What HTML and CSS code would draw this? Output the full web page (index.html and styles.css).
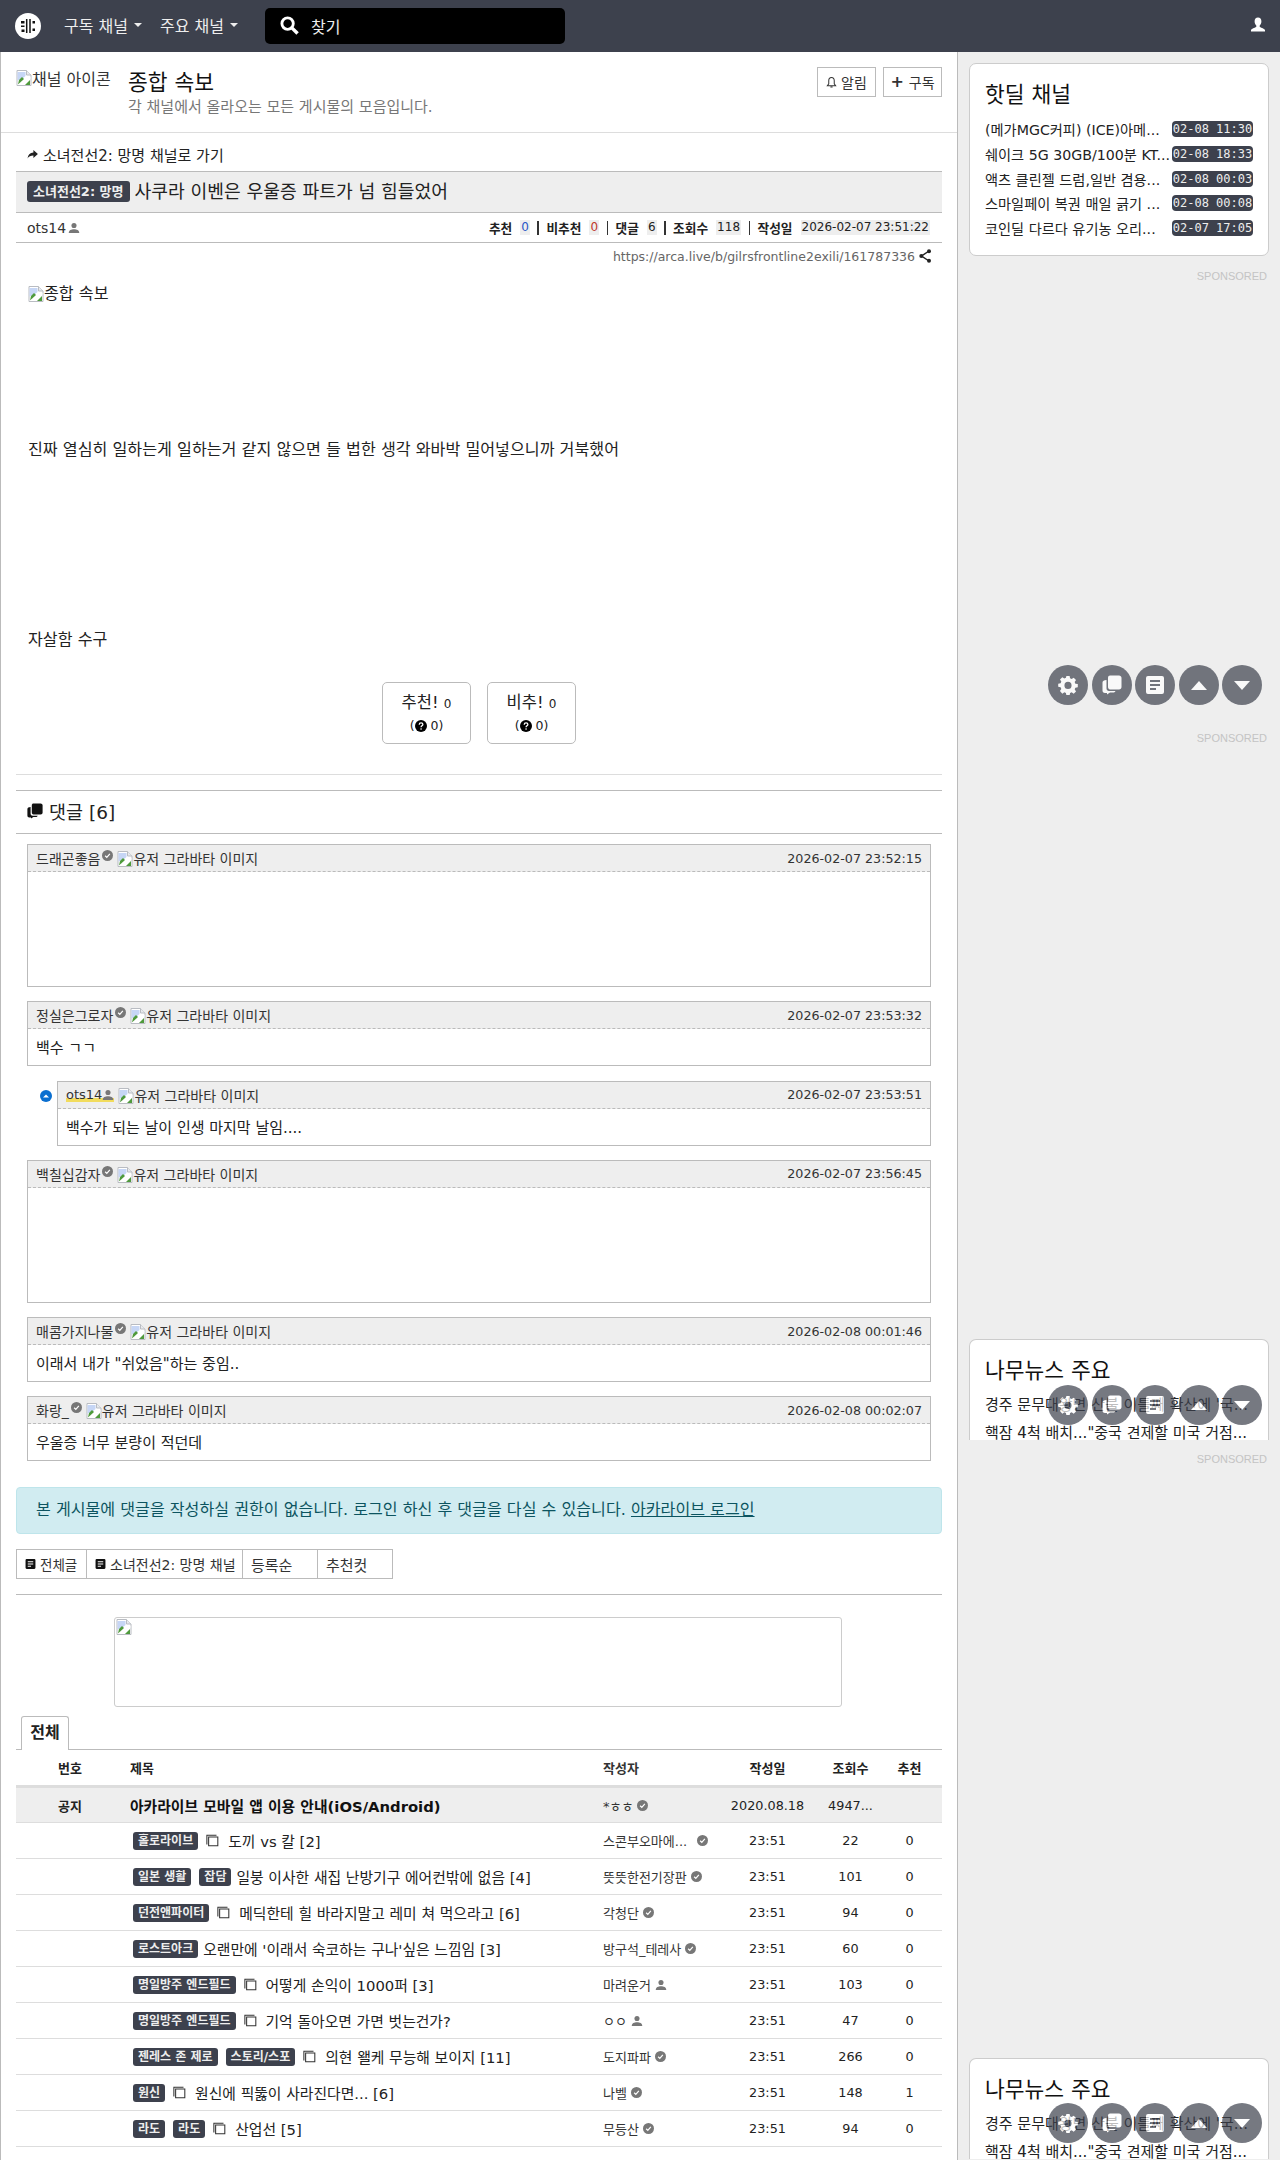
FILE: index.html
```html
<!DOCTYPE html>
<html lang="ko">
<head>
<meta charset="utf-8">
<title>종합 속보</title>
<link rel="stylesheet" href="styles.css">
</head>
<body>
<svg class="defs" width="0" height="0" aria-hidden="true">
  <symbol id="i-broken" viewBox="0 0 16 16">
    <path d="M1 .5h9.5L15 5v10.5H1z" fill="#fff" stroke="#b9bcc2" stroke-width="1"/>
    <path d="M10.5.5V5H15" fill="#e8eaed" stroke="#b9bcc2" stroke-width="1"/>
    <path d="M1.500 2h8v4l-3 2.500-5 2z" fill="#c6d6f5"/>
    <path d="M3 10l3-3 2 2-6 5.500z" fill="#4f9a3c"/>
    <path d="M9 15l5-5v5z" fill="#4f9a3c"/>
    <path d="M1.500 15l13-8v1.500L4 15z" fill="#fff"/>
  </symbol>
  <symbol id="i-check" viewBox="0 0 16 16">
    <circle cx="8" cy="8" r="8" fill="#777"/>
    <path d="M4.600 8.300l2.400 2.400 4.400-5" fill="none" stroke="#fff" stroke-width="1.800"/>
  </symbol>
  <symbol id="i-user" viewBox="0 0 16 16">
    <circle cx="8" cy="4.600" r="3.400"/>
    <path d="M1 14.500c0-3.600 3.400-4.800 7-4.800s7 1.200 7 4.800z"/>
  </symbol>
  <symbol id="i-pics" viewBox="0 0 16 16">
    <path d="M3 3.500h10.500v10H3z" fill="none" stroke="#333" stroke-width="1.200"/>
    <path d="M1 12V1.500h11" fill="none" stroke="#333" stroke-width="1.200"/>
  </symbol>
  <symbol id="i-chat" viewBox="0 0 20 20">
    <path d="M6 2.500C6 1.200 7 .5 8 .5h9c1.400 0 2.500 1 2.500 2.500v9c0 1.500-1 2.500-2.500 2.500H8C7 14.500 6 13.500 6 12z"/>
    <path d="M4.500 5v8.500c0 1.500 1 2.500 2.500 2.500h6.500c-.5 1-1.500 1.500-2.500 1.500H8L5 19.500V18H3c-1.700 0-2.500-1-2.500-2.500V7.500C.5 6 2 5 4.500 5z"/>
  </symbol>
  <symbol id="i-doc" viewBox="0 0 20 20">
    <path fill-rule="evenodd" d="M3 1h14a2 2 0 0 1 2 2v14a2 2 0 0 1-2 2H3a2 2 0 0 1-2-2V3a2 2 0 0 1 2-2zM5 5v2h10V5zM5 9v2h10V9zM5 13v2h6v-2z"/>
  </symbol>
  <symbol id="i-gear" viewBox="0 0 20 20">
    <path fill-rule="evenodd" d="M8.200 0h3.600l.5 2.700 1.800.8L16.400 2 19 4.600l-1.500 2.300.8 1.800L21 9.200v3.600l-2.700.5-.8 1.800 1.500 2.300-2.600 2.600-2.300-1.500-1.800.8-.5 2.700H8.200l-.5-2.700-1.800-.8-2.300 1.500L1 16.900l1.500-2.300-.8-1.800L-1 12.300V8.700l2.700-.5.8-1.800L1 4.100 3.600 1.500l2.300 1.500 1.800-.8zM10 6.700a4 4 0 1 0 0 8 4 4 0 0 0 0-8z" transform="translate(1.100 .9) scale(.89)"/>
  </symbol>
  <symbol id="i-q" viewBox="0 0 16 16">
    <circle cx="8" cy="8" r="8"/>
    <path d="M5.600 6.200c0-1.500 1.100-2.300 2.500-2.300s2.400.8 2.400 2.100c0 1.800-2.400 1.700-2.400 3.500" fill="none" stroke="#fff" stroke-width="1.700"/>
    <circle cx="8.100" cy="12" r="1.100" fill="#fff"/>
  </symbol>
</svg>

<header class="nav">
  <svg class="logo" viewBox="0 0 26 26" aria-label="logo">
    <circle cx="13" cy="13" r="13" fill="#fff"/>
    <path d="M11.700 6v14M15 6v14" stroke="#111" stroke-width="1.500" fill="none"/>
    <path d="M6 8h3.500v2.500H6zM6 12.500h3.500v1.500H6zM6.500 16.500h3V19h-3zM17.500 8H20v2.500h-2.500zM17.500 15.500H20V18h-2.500z" fill="#111"/>
  </svg>
  <a class="nav-link">구독 채널<i class="caret"></i></a>
  <a class="nav-link">주요 채널<i class="caret"></i></a>
  <div class="search">
    <svg class="search-ico" viewBox="0 0 20 20"><circle cx="8" cy="8" r="6" fill="none" stroke="#fff" stroke-width="3"/><path d="M12.500 12.500l6 6" stroke="#fff" stroke-width="3.600"/></svg>
    <span>찾기</span>
  </div>
  <svg class="nav-user" viewBox="0 0 16 16"><path fill="#fff" d="M8 .5c2.200 0 3.400 1.600 3.400 3.800 0 2-.8 3.500-1.700 4.300v1.200c0 .8 4.800 1.600 5.300 3.200v1.500H1v-1.500c.5-1.600 5.300-2.400 5.300-3.200V8.600C5.400 7.800 4.600 6.300 4.600 4.300 4.600 2.100 5.800.5 8 .5z"/></svg>
</header>

<div class="page">
  <main class="main">
    <section class="board-head">
      <div class="board-ico"><svg class="broken"><use href="#i-broken"/></svg><span>채널 아이콘</span></div>
      <div class="board-text">
        <h1>종합 속보</h1>
        <p>각 채널에서 올라오는 모든 게시물의 모음입니다.</p>
      </div>
      <div class="board-btns">
        <a class="sq-btn"><svg class="bell" viewBox="0 0 12 14"><path d="M6 1.500c-2 0-3 1.500-3 3.500v3.500L1.500 10.500h9L9 8.500V5c0-2-1-3.500-3-3.500zM4.800 12h2.400" fill="none" stroke="#333" stroke-width="1.100"/></svg>알림</a>
        <a class="sq-btn"><b class="plus">+</b>구독</a>
      </div>
    </section>

    <div class="content">
      <a class="goto"><svg class="goto-ico" viewBox="0 0 12 10"><path d="M7 0l5 4.500L7 9V6.200C4 6.200 2 7 .5 9.500 1 5.500 3 3.200 7 2.800z" fill="#222"/></svg>소녀전선2: 망명 채널로 가기</a>
      <div class="title-bar"><span class="badge badge-lg">소녀전선2: 망명</span><span class="title">사쿠라 이벤은 우울증 파트가 넘 힘들었어</span></div>
      <div class="meta">
        <span class="author">ots14<svg class="u-ico"><use href="#i-user"/></svg></span>
        <div class="stats">
          <b>추천</b><em class="blue">0</em><i class="sep"></i>
          <b>비추천</b><em class="red">0</em><i class="sep"></i>
          <b>댓글</b><em>6</em><i class="sep"></i>
          <b>조회수</b><em>118</em><i class="sep"></i>
          <b>작성일</b><em>2026-02-07 23:51:22</em>
        </div>
      </div>
      <div class="url">https://arca.live/b/gilrsfrontline2exili/161787336<svg class="share" viewBox="0 0 12 14"><path d="M10 2L2.500 7l7.500 5" fill="none" stroke="#222" stroke-width="1.500"/><circle cx="10" cy="2.200" r="2" fill="#222"/><circle cx="2.300" cy="7" r="2" fill="#222"/><circle cx="10" cy="11.800" r="2" fill="#222"/></svg></div>

      <article class="body">
        <div class="body-img"><svg class="broken"><use href="#i-broken"/></svg><span>종합 속보</span></div>
        <p class="p1">진짜 열심히 일하는게 일하는거 같지 않으면 들 법한 생각 와바박 밀어넣으니까 거북했어</p>
        <p class="p2">자살함 수구</p>
      </article>

      <div class="votes">
        <a class="vote"><span class="v1">추천! <small>0</small></span><span class="v2">(<svg class="q"><use href="#i-q"/></svg> 0)</span></a>
        <a class="vote"><span class="v1">비추! <small>0</small></span><span class="v2">(<svg class="q"><use href="#i-q"/></svg> 0)</span></a>
      </div>

      <hr class="rule-light">
      <h2 class="c-title"><svg class="c-ico"><use href="#i-chat"/></svg>댓글 [6]</h2>

      <div class="comments">
        <div class="cmt tall">
          <div class="cmt-head"><span class="who">드래곤좋음<svg class="chk"><use href="#i-check"/></svg></span><span class="ava"><svg class="broken"><use href="#i-broken"/></svg>유저 그라바타 이미지</span><time>2026-02-07 23:52:15</time></div>
        </div>
        <div class="cmt">
          <div class="cmt-head"><span class="who">정실은그로자<svg class="chk"><use href="#i-check"/></svg></span><span class="ava"><svg class="broken"><use href="#i-broken"/></svg>유저 그라바타 이미지</span><time>2026-02-07 23:53:32</time></div>
          <div class="cmt-body">백수 ㄱㄱ</div>
        </div>
        <div class="reply">
          <svg class="reply-ico" viewBox="0 0 12 12"><circle cx="6" cy="6" r="6" fill="#0a6fd0"/><path d="M3 7.500L6 4.500l3 3z" fill="#fff"/></svg>
          <div class="cmt">
            <div class="cmt-head"><span class="who mine">ots14<svg class="u-ico"><use href="#i-user"/></svg></span><span class="ava"><svg class="broken"><use href="#i-broken"/></svg>유저 그라바타 이미지</span><time>2026-02-07 23:53:51</time></div>
            <div class="cmt-body">백수가 되는 날이 인생 마지막 날임....</div>
          </div>
        </div>
        <div class="cmt tall">
          <div class="cmt-head"><span class="who">백칠십감자<svg class="chk"><use href="#i-check"/></svg></span><span class="ava"><svg class="broken"><use href="#i-broken"/></svg>유저 그라바타 이미지</span><time>2026-02-07 23:56:45</time></div>
        </div>
        <div class="cmt">
          <div class="cmt-head"><span class="who">매콤가지나물<svg class="chk"><use href="#i-check"/></svg></span><span class="ava"><svg class="broken"><use href="#i-broken"/></svg>유저 그라바타 이미지</span><time>2026-02-08 00:01:46</time></div>
          <div class="cmt-body">이래서 내가 "쉬었음"하는 중임..</div>
        </div>
        <div class="cmt">
          <div class="cmt-head"><span class="who">화랑_<svg class="chk"><use href="#i-check"/></svg></span><span class="ava"><svg class="broken"><use href="#i-broken"/></svg>유저 그라바타 이미지</span><time>2026-02-08 00:02:07</time></div>
          <div class="cmt-body">우울증 너무 분량이 적던데</div>
        </div>
      </div>

      <div class="alert">본 게시물에 댓글을 작성하실 권한이 없습니다. 로그인 하신 후 댓글을 다실 수 있습니다. <a>아카라이브 로그인</a></div>

      <div class="tools">
        <a class="tool t-all"><svg class="doc"><use href="#i-doc"/></svg>전체글</a>
        <a class="tool t-ch"><svg class="doc"><use href="#i-doc"/></svg>소녀전선2: 망명 채널</a>
        <a class="tool wide">등록순</a>
        <a class="tool wide">추천컷</a>
      </div>

      <div class="ad-wrap"><div class="ad"><svg class="broken"><use href="#i-broken"/></svg></div></div>

      <div class="tabs"><a class="tab">전체</a></div>

      <div class="tbl">
        <div class="row th"><span class="c-no">번호</span><span class="c-ti">제목</span><span class="c-au">작성자</span><span class="c-da">작성일</span><span class="c-vi">조회수</span><span class="c-re">추천</span></div>
        <div class="row notice"><span class="c-no">공지</span><span class="c-ti">아카라이브 모바일 앱 이용 안내(iOS/Android)</span><span class="c-au">*ㅎㅎ<svg class="chk"><use href="#i-check"/></svg></span><span class="c-da">2020.08.18</span><span class="c-vi">4947...</span><span class="c-re"></span></div>
        <div class="row"><span class="c-no"></span><span class="c-ti"><span class="badge">홀로라이브</span><svg class="pics"><use href="#i-pics"/></svg>도끼 vs 칼 [2]</span><span class="c-au"><span class="clip">스콘부오마에...</span><svg class="chk"><use href="#i-check"/></svg></span><span class="c-da">23:51</span><span class="c-vi">22</span><span class="c-re">0</span></div>
        <div class="row"><span class="c-no"></span><span class="c-ti"><span class="badge">일본 생활</span><span class="badge">잡담</span><span class="t-plain">일붕 이사한 새집 난방기구 에어컨밖에 없음 [4]</span></span><span class="c-au">뜻뜻한전기장판<svg class="chk"><use href="#i-check"/></svg></span><span class="c-da">23:51</span><span class="c-vi">101</span><span class="c-re">0</span></div>
        <div class="row"><span class="c-no"></span><span class="c-ti"><span class="badge">던전앤파이터</span><svg class="pics"><use href="#i-pics"/></svg>메딕한테 힐 바라지말고 레미 쳐 먹으라고 [6]</span><span class="c-au">각청단<svg class="chk"><use href="#i-check"/></svg></span><span class="c-da">23:51</span><span class="c-vi">94</span><span class="c-re">0</span></div>
        <div class="row"><span class="c-no"></span><span class="c-ti"><span class="badge">로스트아크</span><span class="t-plain">오랜만에 '이래서 숙코하는 구나'싶은 느낌임 [3]</span></span><span class="c-au">방구석_테레사<svg class="chk"><use href="#i-check"/></svg></span><span class="c-da">23:51</span><span class="c-vi">60</span><span class="c-re">0</span></div>
        <div class="row"><span class="c-no"></span><span class="c-ti"><span class="badge">명일방주 엔드필드</span><svg class="pics"><use href="#i-pics"/></svg>어떻게 손익이 1000퍼 [3]</span><span class="c-au">마려운거<svg class="u-ico"><use href="#i-user"/></svg></span><span class="c-da">23:51</span><span class="c-vi">103</span><span class="c-re">0</span></div>
        <div class="row"><span class="c-no"></span><span class="c-ti"><span class="badge">명일방주 엔드필드</span><svg class="pics"><use href="#i-pics"/></svg>기억 돌아오면 가면 벗는건가?</span><span class="c-au">ㅇㅇ<svg class="u-ico"><use href="#i-user"/></svg></span><span class="c-da">23:51</span><span class="c-vi">47</span><span class="c-re">0</span></div>
        <div class="row"><span class="c-no"></span><span class="c-ti"><span class="badge">젠레스 존 제로</span><span class="badge">스토리/스포</span><svg class="pics"><use href="#i-pics"/></svg>의현 왤케 무능해 보이지 [11]</span><span class="c-au">도지파파<svg class="chk"><use href="#i-check"/></svg></span><span class="c-da">23:51</span><span class="c-vi">266</span><span class="c-re">0</span></div>
        <div class="row"><span class="c-no"></span><span class="c-ti"><span class="badge">원신</span><svg class="pics"><use href="#i-pics"/></svg>원신에 픽뚫이 사라진다면... [6]</span><span class="c-au">나벨<svg class="chk"><use href="#i-check"/></svg></span><span class="c-da">23:51</span><span class="c-vi">148</span><span class="c-re">1</span></div>
        <div class="row"><span class="c-no"></span><span class="c-ti"><span class="badge">라도</span><span class="badge">라도</span><svg class="pics"><use href="#i-pics"/></svg>산업선 [5]</span><span class="c-au">무등산<svg class="chk"><use href="#i-check"/></svg></span><span class="c-da">23:51</span><span class="c-vi">94</span><span class="c-re">0</span></div>
        <div class="row last"><span class="c-no"></span><span class="c-ti">삭제된 게시물</span></div>
      </div>
    </div>
  </main>

  <aside class="side">
    <section class="card hot">
      <h3>핫딜 채널</h3>
      <ul class="deals">
        <li><span>(메가MGC커피) (ICE)아메...</span><time>02-08 11:30</time></li>
        <li><span>쉐이크 5G 30GB/100분 KT...</span><time>02-08 18:33</time></li>
        <li><span>액츠 클린젤 드럼,일반 겸용...</span><time>02-08 00:03</time></li>
        <li><span>스마일페이 복권 매일 긁기 ...</span><time>02-08 00:08</time></li>
        <li><span>코인딜 다르다 유기농 오리...</span><time>02-07 17:05</time></li>
      </ul>
    </section>
    <div class="spons s1">SPONSORED</div>
    <div class="spons s2">SPONSORED</div>
    <section class="card news n1">
      <h3>나무뉴스 주요</h3>
      <p>경주 문무대왕면 산불 이틀째 확산에 '국...</p>
      <p>핵잠 4척 배치..."중국 견제할 미국 거점...</p>
    </section>
    <div class="spons s3">SPONSORED</div>
    <section class="card news n2">
      <h3>나무뉴스 주요</h3>
      <p>경주 문무대왕면 산불 이틀째 확산에 '국...</p>
      <p>핵잠 4척 배치..."중국 견제할 미국 거점...</p>
    </section>

    <div class="floats f1">
      <a><svg><use href="#i-gear"/></svg></a><a><svg><use href="#i-chat"/></svg></a><a><svg><use href="#i-doc"/></svg></a><a><i class="tri up"></i></a><a><i class="tri down"></i></a>
    </div>
    <div class="floats f2">
      <a><svg><use href="#i-gear"/></svg></a><a><svg><use href="#i-chat"/></svg></a><a><svg><use href="#i-doc"/></svg></a><a><i class="tri up"></i></a><a><i class="tri down"></i></a>
    </div>
    <div class="floats f3">
      <a><svg><use href="#i-gear"/></svg></a><a><svg><use href="#i-chat"/></svg></a><a><svg><use href="#i-doc"/></svg></a><a><i class="tri up"></i></a><a><i class="tri down"></i></a>
    </div>
  </aside>
</div>
</body>
</html>
```

FILE: styles.css
```css
* { box-sizing: border-box; }
html, body { margin: 0; padding: 0; height: 2160px; overflow: hidden; }
body {
  font-family: "DejaVu Sans", "Noto Sans CJK KR", sans-serif;
  font-size: 14px;
  color: #212529;
  background: #eee;
}
a { color: inherit; }
h1, h2, h3, p, ul { margin: 0; padding: 0; font-weight: 400; }
.defs { position: absolute; }
.broken { width: 16px; height: 16px; flex: none; vertical-align: -3px; }

.nav {
  height: 52px;
  background: #3d414d;
  display: flex;
  align-items: center;
  padding-left: 15px;
  padding-bottom: 2px;
  color: #eee;
}
.logo { width: 26px; height: 26px; margin-right: 23px; margin-top: 2px; }
.nav-link { font-size: 16px; display: flex; align-items: center; margin-right: 18px; }
.caret { width: 0; height: 0; border: 4px solid transparent; border-top-color: #eee; border-bottom: 0; margin-left: 6px; }
.search {
  margin-left: 9px;
  margin-top: 2px;
  width: 300px;
  height: 36px;
  background: #000;
  border-radius: 5px;
  display: flex;
  align-items: center;
  padding-left: 15px;
  font-size: 16px;
  padding-bottom: 1px;
}
.search-ico { width: 19px; height: 19px; margin-right: 12px; }
.nav-user { width: 16px; height: 16px; margin-left: auto; margin-right: 14px; }

.page { display: flex; height: 2108px; overflow: hidden; }
.main {
  width: 958px;
  flex: none;
  background: #fff;
  border-left: 1px solid #bbb;
  border-right: 1px solid #bbb;
}
.board-head {
  height: 81px;
  border-bottom: 1px solid #ddd;
  display: flex;
  padding: 15px 15px 0 15px;
}
.board-ico { width: 95px; overflow: hidden; white-space: nowrap; margin-right: 17px; display: flex; align-items: center; font-size: 16px; height: 22px; color: #333; }
.board-text h1 { font-size: 21.500px; line-height: 28px; color: #111; margin-top: 2px; }
.board-text p { font-size: 15px; line-height: 20px; color: #777; margin-top: 0; }
.board-btns { margin-left: auto; display: flex; gap: 7px; margin-right: 0; }
.sq-btn {
  height: 30px;
  min-width: 59px;
  border: 1px solid #bbb;
  font-size: 14px;
  display: flex;
  align-items: center;
  justify-content: center;
  color: #333;
  background: #fff;
}
.bell { width: 11px; height: 13px; margin-right: 4px; }
.plus { font-size: 16px; margin-right: 5px; line-height: 1; }

.content { padding: 0 15px; }
.goto { display: flex; align-items: center; height: 38px; padding: 5px 11px 0; font-size: 15px; color: #222; }
.goto-ico { width: 11px; height: 9px; margin-right: 5px; }
.title-bar {
  height: 42px;
  background: #eee;
  border-top: 1px solid #bbb;
  border-bottom: 1px solid #bbb;
  display: flex;
  align-items: center;
  padding-left: 11px;
  padding-bottom: 4px;
  color: #222;
}
.badge {
  display: inline-block;
  background: #3d414d;
  color: #eee;
  font-weight: 700;
  font-size: 12px;
  line-height: 18px;
  height: 18px;
  padding: 0 5px;
  border-radius: 3px;
  white-space: nowrap;
}
.badge-lg { padding: 0 6px; margin-right: 5px; font-size: 13px; height: 21px; line-height: 21px; margin-top: 3px; }
.title { font-size: 18.200px; }
.meta {
  height: 30px;
  border-bottom: 1px solid #bbb;
  display: flex;
  align-items: center;
  justify-content: space-between;
  padding: 0 12px 0 11px;
}
.author { font-size: 14px; color: #333; display: flex; align-items: center; }
.u-ico { width: 12px; height: 12px; fill: #777; margin-left: 2px; flex: none; }
.stats { display: flex; align-items: center; font-size: 12px; color: #222; }
.stats b { font-size: 12.700px; }
.stats em { font-style: normal; background: #eee; margin-left: 8px; padding: 0 1px; line-height: 15px; }
.blue { color: #2a56c6; }
.red { color: #c0392b; }
.sep { width: 1.500px; height: 14px; background: #333; margin: 0 7.500px; display: block; }
.url { display: flex; align-items: center; justify-content: flex-end; height: 24px; font-size: 12.500px; color: #666; padding-right: 11px; padding-top: 2px; }
.share { width: 12px; height: 14px; margin-left: 4px; }

.body { padding: 0 12px; font-size: 16.150px; color: #222; }
.body-img { height: 20px; margin-top: 13px; }
.p1 { margin-top: 140px; line-height: 20px; }
.p2 { margin-top: 170px; line-height: 20px; }

.votes { display: flex; justify-content: center; gap: 16px; margin-top: 32px; }
.vote {
  width: 89px;
  height: 62px;
  border: 1px solid #bbb;
  border-radius: 5px;
  display: flex;
  flex-direction: column;
  align-items: center;
  justify-content: center;
  gap: 6px;
  color: #222;
}
.v1 { font-size: 16.500px; line-height: 18px; }
.v1 small { font-size: 12px; }
.v2 { font-size: 12.500px; line-height: 14px; }
.q { width: 12px; height: 12px; vertical-align: -2px; }

.rule-light { border: 0; border-top: 1px solid #ddd; margin: 30px 0 0; }
.c-title {
  margin-top: 15px;
  height: 44px;
  border-top: 1px solid #bbb;
  border-bottom: 1px solid #bbb;
  display: flex;
  align-items: center;
  padding-left: 11px;
  padding-bottom: 2px;
  font-size: 18.500px;
  color: #222;
}
.c-ico { width: 16px; height: 16px; margin-right: 6px; fill: #111; }

.comments { display: flex; flex-direction: column; gap: 14.300px; padding: 10px 11px 0; }
.cmt { border: 1px solid #bbb; min-height: 65px; flex: 1; }
.cmt.tall { height: 143px; flex: none; }
.cmt-head {
  height: 27px;
  background: #eee;
  border-bottom: 1px dashed #bbb;
  display: flex;
  align-items: center;
  padding: 0 8px 0 8px;
  font-size: 14px;
  color: #333;
  white-space: nowrap;
}
.who { display: flex; align-items: center; }
.mine { background: linear-gradient(transparent 72%, #f2dc5d 72%); font-size: 13px; }
.mine .u-ico { margin-left: 0; }
.chk { width: 11px; height: 11px; margin-left: 2px; flex: none; }
.who .chk { margin-top: -5px; }
.ava { margin-left: 4px; }
.cmt-head time { margin-left: auto; font-size: 12.700px; }
.cmt-body { padding: 0 8px; line-height: 36px; height: 36px; font-size: 15px; color: #222; position: relative; top: 1px; }
.reply { display: flex; align-items: flex-start; padding-left: 13px; }
.reply-ico { width: 12px; height: 12px; margin: 9px 5px 0 0; flex: none; }
.reply .cmt { min-height: 65px; }

.alert {
  margin-top: 26px;
  height: 47px;
  background: #d1ecf1;
  border: 1px solid #bee5eb;
  border-radius: 4px;
  color: #0c5460;
  padding-left: 19px;
  line-height: 44px;
  font-size: 16.100px;
  white-space: nowrap;
}
.alert a { text-decoration: underline; }
.tools { display: flex; margin-top: 15px; padding-bottom: 15px; border-bottom: 1px solid #bbb; }
.tool {
  height: 30px;
  border: 1px solid #bbb;
  margin-right: -1px;
  display: flex;
  align-items: center;
  padding: 0 0 0 8px;
  font-size: 14px;
  color: #333;
  white-space: nowrap;
}
.t-all { width: 71px; font-size: 13.500px; }
.t-ch { width: 157px; }
.tool.wide { width: 76px; font-size: 15px; }
.doc { width: 11px; height: 12px; fill: #111; margin-right: 4px; flex: none; }
.ad-wrap { display: flex; justify-content: center; padding-top: 22px; padding-right: 2px; }
.ad {
  width: 728px;
  height: 90px;
  border: 1px solid #ccc;
  border-radius: 3px;
  padding-left: 1px;
  padding-top: 1px;
}
.tabs { height: 43px; padding: 9px 0 0 5px; border-bottom: 1px solid #bbb; }
.tab {
  display: block;
  width: 48px;
  height: 34px;
  border: 1px solid #bbb;
  border-bottom: 0;
  border-radius: 3px 3px 0 0;
  background: #fff;
  text-align: center;
  line-height: 32px;
  font-size: 16px;
  font-weight: 700;
  color: #222;
  margin-bottom: -1px;
  position: relative;
}

.row {
  display: flex;
  align-items: center;
  height: 36px;
  border-bottom: 1px solid #ddd;
  font-size: 14.800px;
  color: #222;
  white-space: nowrap;
}
.row > span { display: flex; align-items: center; overflow: hidden; }
.c-no { width: 114px; padding-left: 42px; font-size: 13px; font-weight: 700; }
.c-ti { width: 473px; }
.c-au { width: 119px; font-size: 13px; color: #333; }
.c-da { width: 91px; justify-content: center; font-size: 12.800px; }
.c-vi { width: 75px; justify-content: center; font-size: 12.800px; }
.c-re { width: 43px; justify-content: center; font-size: 12.800px; }
.th { height: 38px; border-bottom: 3px solid #ddd; font-weight: 700; font-size: 13px; }
.th .c-au, .th .c-da, .th .c-vi, .th .c-re, .th .c-ti { font-size: 13px; }
.notice { height: 35px; background: #eee; }
.notice .c-ti { font-weight: 700; font-size: 14.800px; color: #111; }
.row:not(.th):not(.notice) .c-ti { padding-left: 3px; }
.row:not(.th) .chk { margin-left: 4px; }
.row:not(.th) .u-ico { margin-left: 4px; }
.row .badge { margin-right: 8px; }
.pics { width: 14px; height: 14px; margin-right: 8px; flex: none; }
.t-plain { margin-left: -3px; }
.clip { width: 90px; }
.last .c-ti { color: #777; font-size: 13px; }
.last { border-bottom: 0; }

.side { width: 322px; flex: none; position: relative; padding: 11px 11px 0 11px; }
.card { background: #fff; border: 1px solid #ccc; border-radius: 7px; width: 300px; overflow: hidden; }
.card h3 { font-size: 21.500px; line-height: 28px; color: #111; }
.hot { height: 193px; padding: 17px 15px 0; }
.deals { list-style: none; margin-top: 8px; }
.deals li { display: flex; align-items: center; height: 24.700px; font-size: 14.200px; color: #222; }
.deals span { width: 187px; white-space: nowrap; overflow: hidden; }
.deals time {
  width: 81px;
  height: 16px;
  line-height: 16px;
  background: #3d414d;
  color: #eee;
  border-radius: 4px;
  text-align: center;
  font-family: "DejaVu Sans Mono", monospace;
  font-size: 12px;
  flex: none;
}
.spons { font-family: "Liberation Sans", sans-serif; font-size: 11px; color: #c4c4c4; text-align: right; width: 298px; line-height: 14px; }
.s1 { margin-top: 13px; }
.s2 { margin-top: 448px; }
.news { height: 101px; padding: 17px 15px 0; border-bottom: 0; border-radius: 7px 7px 0 0; }
.news p { font-size: 15px; line-height: 28px; color: #222; white-space: nowrap; }
.news h3 { margin-bottom: 6px; }
.n1 { margin-top: 594px; }
.s3 { margin-top: 12px; }
.n2 { margin-top: 592px; }

.floats { position: absolute; left: 90px; display: flex; gap: 3.500px; opacity: .7; }
.floats a {
  width: 40px;
  height: 40px;
  border-radius: 50%;
  background: #3d414d;
  display: flex;
  align-items: center;
  justify-content: center;
}
.floats svg { width: 20px; height: 20px; fill: #fff; }
.f1 { top: 613px; }
.f2 { top: 1333px; }
.f3 { top: 2051px; }
.tri { width: 0; height: 0; border-left: 8px solid transparent; border-right: 8px solid transparent; display: block; }
.tri.up { border-bottom: 9px solid #fff; }
.tri.down { border-top: 9px solid #fff; }
```
